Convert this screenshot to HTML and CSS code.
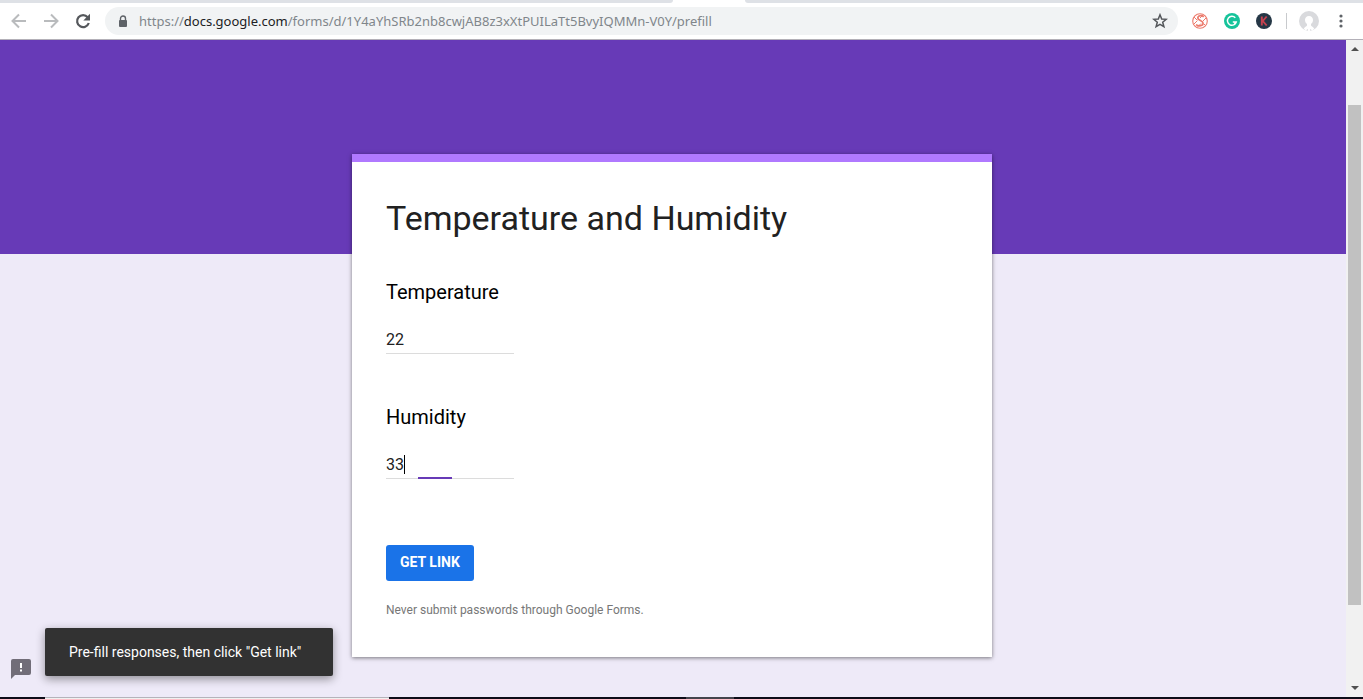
FILE: index.html
```html
<!DOCTYPE html>
<html lang="en">
<head>
<meta charset="utf-8">
<title>Temperature and Humidity</title>
<link rel="stylesheet" href="styles.css">
</head>
<body>
<div class="window">
  <div class="tabstrip"><span class="tab-rest tab-rest-left"></span><span class="tab-active"></span><span class="tab-rest tab-rest-right"></span></div>
  <header class="toolbar">
    <nav class="nav" aria-label="Browser navigation">
      <button class="icon-button dim" aria-label="Back"><svg width="16" height="16" viewBox="0 0 16 16" fill="none" stroke="currentColor" stroke-width="2"><path d="M15 8H2M8 1.500 1.500 8 8 14.500"/></svg></button>
      <button class="icon-button dim" aria-label="Forward"><svg width="16" height="16" viewBox="0 0 16 16" fill="none" stroke="currentColor" stroke-width="2"><path d="M1 8h13M8 1.500 14.500 8 8 14.500"/></svg></button>
      <button class="icon-button" aria-label="Reload"><svg width="16" height="16" viewBox="0 0 16 16"><path d="M12.700 4.200A6 6 0 1 0 13.800 10" fill="none" stroke="currentColor" stroke-width="2.200"/><path d="M15 .8v6.700H8.300z" fill="currentColor"/></svg></button>
    </nav>
    <div class="address">
      <svg class="lock" width="10" height="13" viewBox="0 0 10 13"><path d="M2.500 6V3.500a2.500 2.500 0 0 1 5 0V6" fill="none" stroke="#5f6368" stroke-width="1.400"/><rect x="1" y="5" width="8" height="7" rx="1" fill="#5f6368"/></svg>
      <a class="url" href="#">https://<span class="domain">docs.google.com</span>/forms/d/1Y4aYhSRb2nb8cwjAB8z3xXtPUILaTt5BvyIQMMn-V0Y/prefill</a>
      <button class="star" aria-label="Bookmark this page"><svg width="16" height="16" viewBox="0 0 16 16"><path d="M8 1.800 9.700 6l4.500.3-3.500 2.900 1.200 4.500L8 11.300l-3.900 2.400 1.200-4.500L1.800 6.300 6.300 6z" fill="none" stroke="#54575b" stroke-width="1.500"/></svg></button>
    </div>
    <div class="extensions">
      <button class="icon-button" aria-label="Extension S"><svg width="16" height="16" viewBox="0 0 16 16" fill="none" stroke="#ec7a6c"><circle cx="8" cy="8" r="7.300" stroke-width="1.100"/><path d="M11.700 3.800C9.900 2 5.900 2.400 5.800 5c-.1 2.700 5.300 2.500 5.300 5.300 0 2.600-4.300 3.500-7.100 1.300" stroke-width="1.700"/><path d="m1.500 11.500 4-4M5 14.500l4-4M11 2l-3 3M14 5l-3.500 3.500M2 4l3 3M12 11l1.500 1.500" stroke-width="1"/></svg></button>
      <button class="icon-button" aria-label="Grammar checker"><svg width="16" height="16" viewBox="0 0 16 16"><circle cx="8" cy="8" r="8" fill="#15c39a"/><path d="M11.300 4.700A4.500 4.500 0 1 0 12.300 9H8.800M10.300 11l1.700-2" fill="none" stroke="#fff" stroke-width="1.400"/></svg></button>
      <button class="icon-button" aria-label="Extension K"><svg width="16" height="16" viewBox="0 0 16 16"><circle cx="8" cy="8" r="8" fill="#253746"/><path d="M5.800 3.500v9M10.700 3.500 6.800 8l3.900 4.500" fill="none" stroke="#c64350" stroke-width="1.900"/></svg></button>
      <span class="divider"></span>
      <button class="icon-button profile" aria-label="Profile"><svg width="20" height="20" viewBox="0 0 20 20"><circle cx="10" cy="10" r="10" fill="#d9dadd"/><path d="M10 5c-2.600 0-4 1.700-4 4 0 2 .9 3.300 2 4v1.500c-.8 1-2 1.200-3.200 3.100L6.500 19.500 9 18v2h2v-2l2.500 1.500 1.700-1.900c-1.200-1.900-2.400-2.100-3.200-3.100V13c1.100-.7 2-2 2-4 0-2.300-1.400-4-4-4z" fill="#fff"/></svg></button>
      <button class="icon-button" aria-label="Menu"><svg width="16" height="16" viewBox="0 0 16 16" fill="#5f6368"><circle cx="8" cy="3" r="1.600"/><circle cx="8" cy="8" r="1.600"/><circle cx="8" cy="13" r="1.600"/></svg></button>
    </div>
  </header>
  <div class="viewport">
    <main class="page">
      <div class="banner"></div>
      <form class="card">
        <h1 class="title">Temperature and Humidity</h1>
        <div class="question">
          <label class="label" for="temperature">Temperature</label>
          <div class="field"><input class="input" id="temperature" type="text" value="22"></div>
        </div>
        <div class="question">
          <label class="label" for="humidity">Humidity</label>
          <div class="field"><input class="input" id="humidity" type="text" value="33"><span class="caret"></span><span class="focus-line"></span></div>
        </div>
        <button class="submit" type="button">GET LINK</button>
        <p class="notice">Never submit passwords through Google Forms.</p>
      </form>
      <button class="report" aria-label="Report a problem"><svg width="20" height="20" viewBox="0 0 20 20"><path d="M2 0h16a2 2 0 0 1 2 2v12a2 2 0 0 1-2 2H4l-4 4V2a2 2 0 0 1 2-2z" fill="#716d78"/><path d="M9 4h2v5H9zM9 10.500h2v2H9z" fill="#fff"/></svg></button>
      <div class="toast" role="status">Pre-fill responses, then click "Get link"</div>
    </main>
    <div class="scrollbar">
      <svg width="8" height="4" viewBox="0 0 8 4"><path d="M4 0 8 4H0z" fill="#505050"/></svg>
      <div class="track"><div class="thumb"></div></div>
      <svg width="8" height="4" viewBox="0 0 8 4"><path d="M0 0h8L4 4z" fill="#505050"/></svg>
    </div>
  </div>
  <div class="taskbar"><span class="task-dark"></span><span class="task-search"></span><span class="task-gap"></span><span class="task-active"></span></div>
</div>
</body>
</html>
```
FILE: styles.css
```css
* { box-sizing: border-box; }
body { margin: 0; font-family: Roboto, "Liberation Sans", sans-serif; }
button { border: 0; padding: 0; background: none; font: inherit; }
svg { display: block; }

.window { display: flex; flex-direction: column; height: 100vh; overflow: hidden; }
.tabstrip { display: flex; height: 3px; flex: none; background: #fff; }
.tab-rest { background: #dee1e6; }
.tab-rest-left { flex: 1; border-bottom-right-radius: 3px; }
.tab-active { width: 72px; }
.tab-rest-right { width: 618px; border-bottom-left-radius: 3px; }

.toolbar { display: flex; align-items: center; flex: none; height: 37px; padding: 0 14px 0 11px; background: #fff; border-bottom: 1px solid #b3b0b8; }
.nav { display: flex; gap: 16px; }
.icon-button { display: flex; color: #55585c; }
.dim { color: #b9bbbd; }
.address { display: flex; align-items: center; flex: 1; height: 28px; margin: 0 14px; padding: 0 10px 0 13px; border-radius: 14px; background: #f1f3f4; }
.url { flex: 1; margin-left: 11px; font: 13px/20px "Noto Sans", "Open Sans", sans-serif; color: #80868b; text-decoration: none; white-space: nowrap; }
.domain { color: #202124; }
.extensions { display: flex; align-items: center; gap: 16px; }
.divider { width: 1px; height: 16px; margin-right: -4px; margin-left: -2px; background: #c8cacd; }
.profile { margin-right: -2px; }

.viewport { display: flex; flex: 1; min-height: 0; }
.page { position: relative; flex: 1; padding-right: 2px; background: #eeeaf8; overflow: hidden; }
.banner { height: 214px; margin-right: -2px; background: #673ab7; }
.card { position: relative; width: 640px; max-width: 100%; margin: -100px auto 0; padding: 33px 34px 38px; border-top: 8px solid #b079ff; background: #fff; box-shadow: 0 1px 4px rgba(0, 0, 0, 0.5); }
.title { margin: 0 0 39px; font-size: 34px; line-height: 46px; font-weight: 400; color: #212121; }
.question { display: flex; flex-direction: column; align-items: flex-start; margin-bottom: 51px; }
.label { margin-bottom: 21px; font-size: 20px; line-height: 24px; color: #000; }
.field { position: relative; width: 128px; border-bottom: 1px solid #dcdcdc; }
.input { display: block; width: 100%; height: 28px; padding: 0; border: 0; outline: 0; background: transparent; font: 16px/24px Roboto, "Liberation Sans", sans-serif; color: #212121; }
.caret { position: absolute; left: 18px; top: 5px; width: 1px; height: 19px; background: #000; }
.focus-line { position: absolute; left: 32px; bottom: -1px; width: 34px; height: 2px; background: #673ab7; }
.submit { display: block; height: 36px; margin-top: 66px; padding: 0 14px 2px; border-radius: 3px; background: #1a73e8; color: #fff; font-size: 14px; font-weight: 700; }
.notice { margin: 20px 0 0; font-size: 12px; line-height: 18px; color: #777; }
.report { position: absolute; left: 11px; bottom: 18px; }
.toast { position: absolute; left: 45px; bottom: 21px; width: 288px; padding: 12px 24px; border-radius: 2px; background: #323232; color: #fff; font-size: 14px; line-height: 24px; white-space: nowrap; box-shadow: 0 3px 10px rgba(0, 0, 0, 0.4); }

.scrollbar { display: flex; flex-direction: column; align-items: center; width: 17px; padding: 7px 0; background: #f1f1f1; }
.track { flex: 1; width: 13px; padding-top: 54px; }
.thumb { height: 86%; background: #c1c1c1; }

.taskbar { display: flex; flex: none; height: 2px; background: #0c0c18; }
.task-dark { width: 45px; }
.task-search { width: 344px; background: #f0f0f0; border-top: 1px solid #b5b3bb; }
.task-gap { width: 297px; }
.task-active { width: 48px; background: #44444d; }
```
